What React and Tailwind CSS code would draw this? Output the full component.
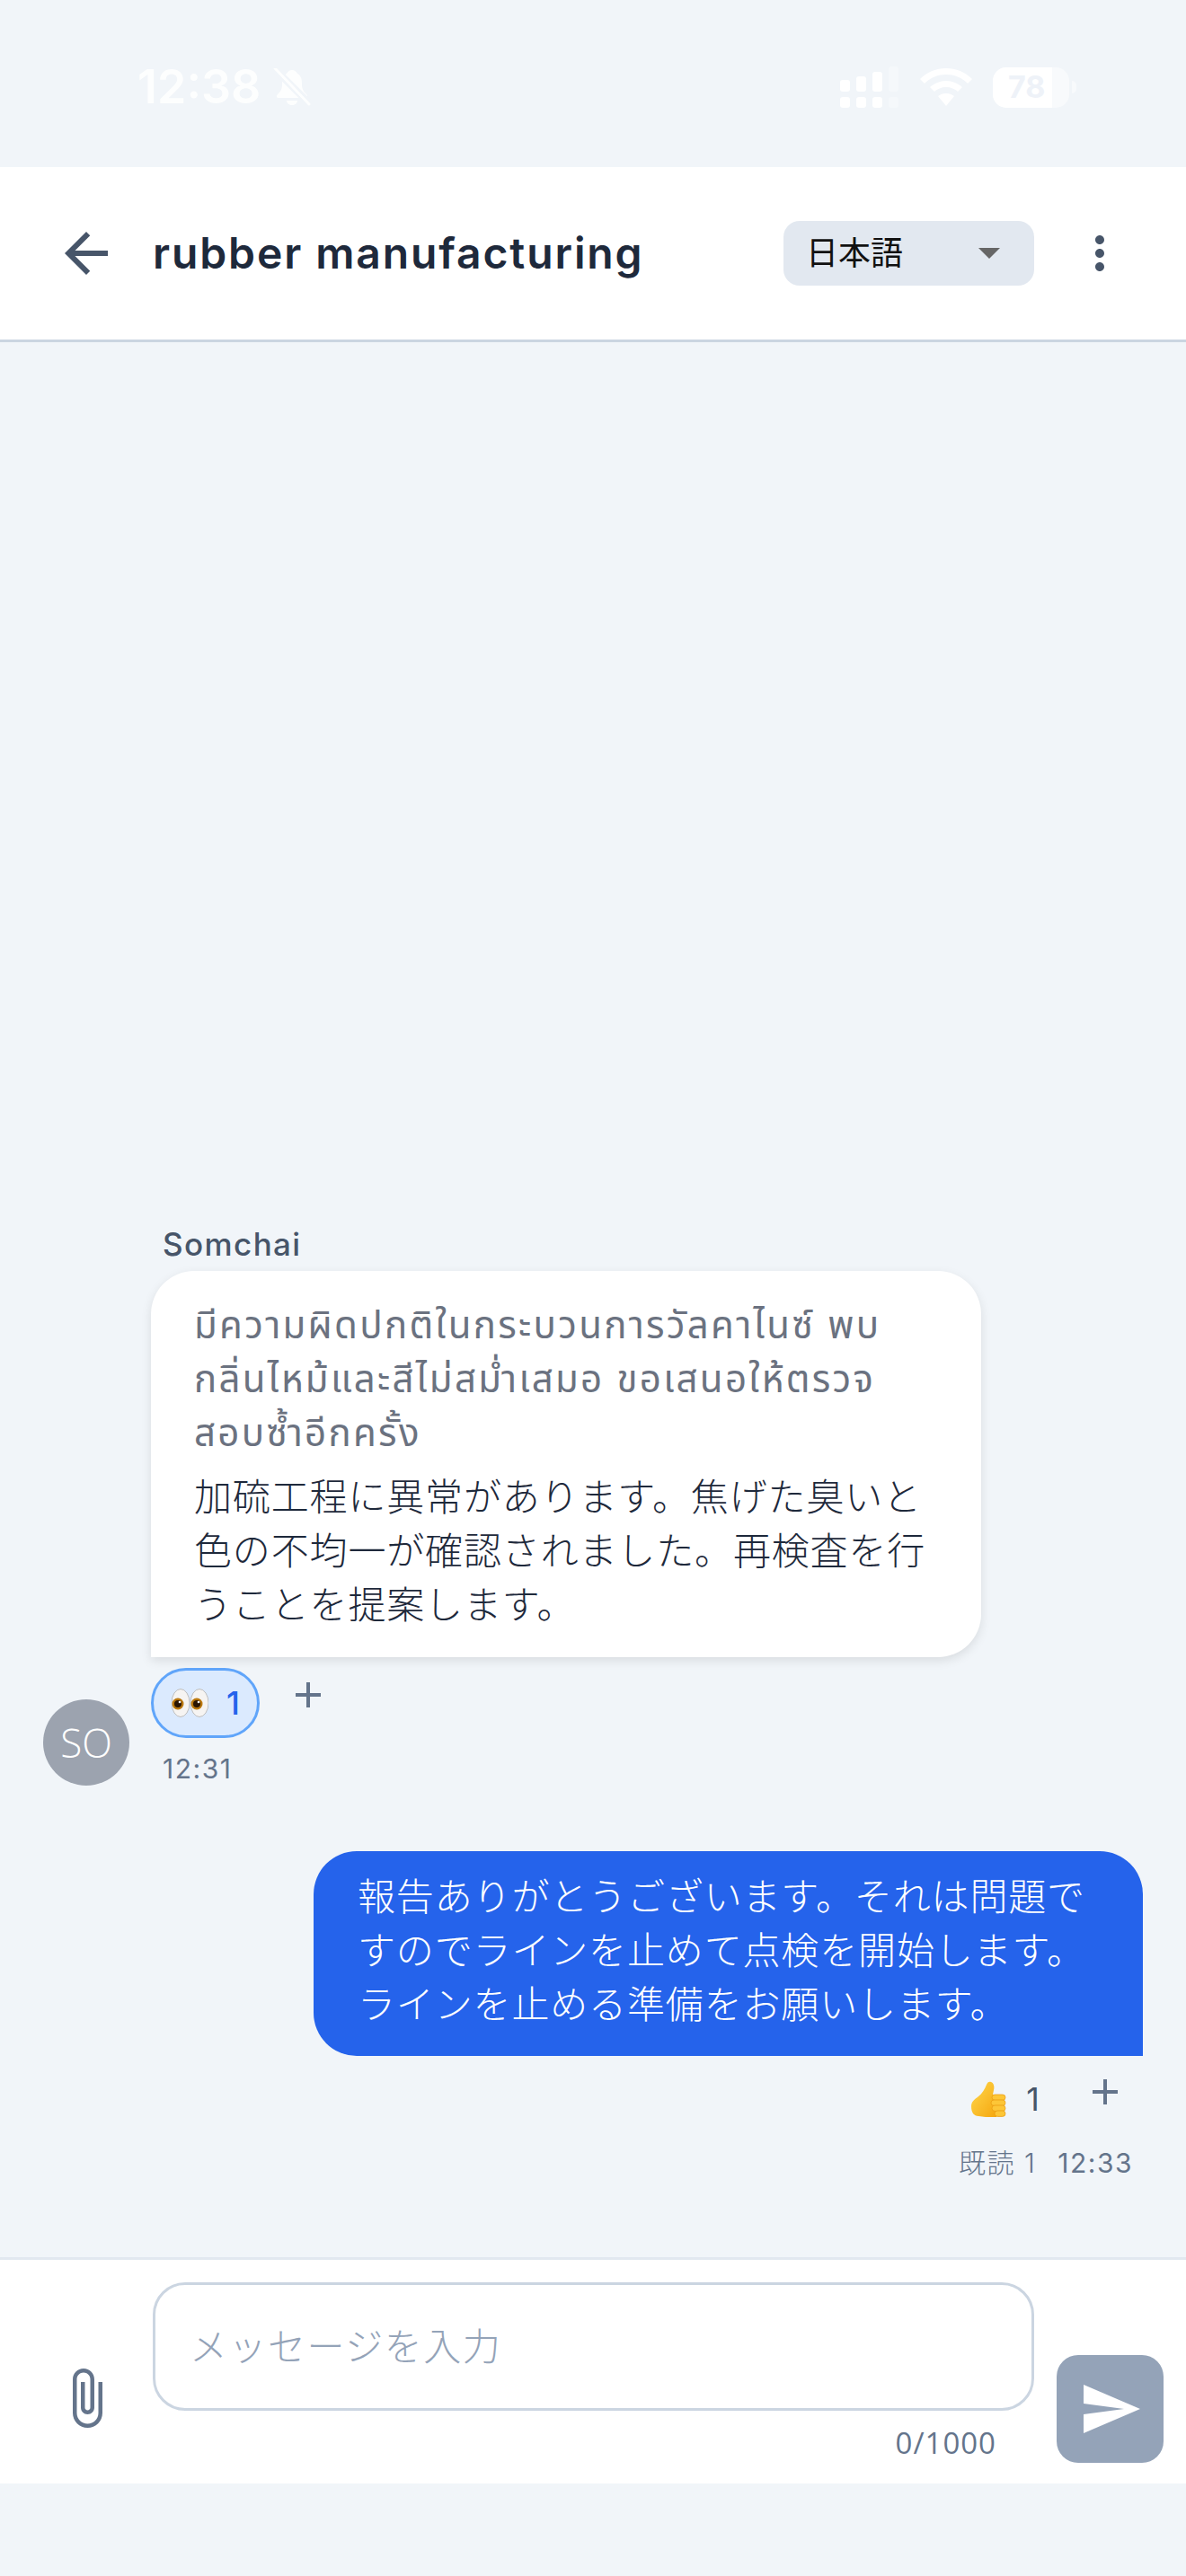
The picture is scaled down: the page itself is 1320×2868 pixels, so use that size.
const cjk = { fontFamily: 'Inter, "Noto Sans CJK JP", "Noto Sans Thai", "Noto Sans", sans-serif' };

function MuiIcon({ d, size, className }) {
  return (
    <svg viewBox="0 0 24 24" width={size} height={size} fill="currentColor" className={className}>
      <path d={d} />
    </svg>
  );
}

const icons = {
  back: 'M20 11H7.83l5.59-5.59L12 4l-8 8 8 8 1.41-1.41L7.83 13H20v-2z',
  more: 'M12 8c1.1 0 2-.9 2-2s-.9-2-2-2-2 .9-2 2 .9 2 2 2zm0 2c-1.1 0-2 .9-2 2s.9 2 2 2 2-.9 2-2-.9-2-2-2zm0 6c-1.1 0-2 .9-2 2s.9 2 2 2 2-.9 2-2-.9-2-2-2z',
  add: 'M19 13h-6v6h-2v-6H5v-2h6V5h2v6h6v2z',
  send: 'M2.01 21L23 12 2.01 3 2 10l15 2-15 2z',
  attach: 'M16.5 6v11.5c0 2.21-1.79 4-4 4s-4-1.79-4-4V5c0-1.38 1.12-2.5 2.5-2.5s2.5 1.12 2.5 2.5v10.5c0 .55-.45 1-1 1s-1-.45-1-1V6H10v9.5c0 1.38 1.12 2.5 2.5 2.5s2.5-1.12 2.5-2.5V5c0-2.21-1.79-4-4-4S7 2.79 7 5v12.5c0 3.04 2.46 5.5 5.5 5.5s5.5-2.46 5.5-5.5V6h-1.5z',
};

function Eyes() {
  const eye = (cx, px) => (
    <g key={cx}>
      <ellipse cx={cx} cy="16" rx="10" ry="15.5" fill="#f6f4f2" stroke="#bdbdbd" strokeWidth="1" />
      <circle cx={px} cy="17" r="6.5" fill="#b9770e" />
      <circle cx={px} cy="17" r="4" fill="#2a1503" />
      <circle cx={px + 2} cy="15" r="1.3" fill="#fff" />
    </g>
  );
  return (
    <svg viewBox="0 0 41 32" width="41" height="32">
      {eye(10, 7)}
      {eye(31, 28)}
    </svg>
  );
}

function Thumb() {
  const fingers = [
    [15, 15],
    [21, 16],
    [27, 15],
    [33, 12],
  ];
  return (
    <svg viewBox="0 0 40 41" width="40" height="41">
      <defs>
        <linearGradient id="thumbFill" x1="0" y1="0" x2="1" y2="1">
          <stop offset="0" stopColor="#ffd84d" />
          <stop offset="1" stopColor="#f5a70f" />
        </linearGradient>
      </defs>
      <path d="M0 28c0-5 4-8 8-11 4-3 7-8 9-13 1-3 3-4 5-3 3 1 4 5 3 9l-1 5h4v25H16c-3 0-5-1-8-1-5 0-8-4-8-11z" fill="url(#thumbFill)" />
      {fingers.map(([y, w]) => (
        <rect key={y} x={39 - w - 1} y={y} width={w} height="6.4" rx="3.2" fill="#fdc637" stroke="#e8980f" strokeWidth="0.7" />
      ))}
    </svg>
  );
}

function StatusBar() {
  return (
    <div className="h-[186px] shrink-0 flex items-center justify-between pt-[8px] pl-[153px] pr-[122px]">
      <div className="flex items-center gap-[14px] text-white">
        <span className="text-[52px] leading-none font-semibold opacity-90">12:38</span>
        <svg viewBox="0 0 42 42" width="42" height="42" fill="#fff" opacity="0.9">
          <path d="M21 2c3 0 5 2 6 4 4 2 5 6 5 11 0 5 1 8 5 12 2 2 1 4-1 4H6c-2 0-3-2-1-4 4-4 5-6 5-12 0-5 1-9 5-11 1-2 3-4 6-4z" />
          <path d="M15 36h12c0 3-3 5-6 5s-6-2-6-5z" />
          <path d="M2 1l38 38" stroke="#f1f5f9" strokeWidth="8" />
          <path d="M2 0l38 40" stroke="#fff" strokeWidth="3" strokeLinecap="round" />
        </svg>
      </div>
      <div className="flex items-center gap-[23px]">
        <svg viewBox="0 0 66 46" width="66" height="46" fill="#fff">
          <rect x="0" y="15" width="11" height="13" rx="3" />
          <rect x="18" y="11" width="11" height="17" rx="3" />
          <rect x="36" y="6" width="11" height="22" rx="3" />
          <rect x="54" y="0" width="11" height="28" rx="3" opacity="0.3" />
          <rect x="0" y="34" width="11" height="12" rx="3" />
          <rect x="18" y="34" width="11" height="12" rx="3" />
          <rect x="36" y="34" width="11" height="12" rx="3" />
          <rect x="54" y="34" width="11" height="12" rx="3" opacity="0.3" />
        </svg>
        <svg viewBox="0 0 58 42" width="58" height="42" fill="#fff">
          <path d="M29 0c11 0 21 4 29 12l-5 5C46 10 38 7 29 7S12 10 5 17l-5-5C8 4 18 0 29 0z" />
          <path d="M29 14c7 0 13 3 18 7l-5 5c-3-3-8-5-13-5s-10 2-13 5l-5-5c5-4 11-7 18-7z" />
          <path d="M29 28c4 0 6 1 9 3L29 42l-9-11c3-2 5-3 9-3z" />
        </svg>
        <div className="flex items-center gap-[3px]">
          <div className="relative w-[85px] h-[45px] rounded-[15px] overflow-hidden bg-white/50 flex items-center pl-[17px]">
            <div className="absolute left-0 top-0 bottom-0 w-[66px] bg-white" />
            <span className="relative text-[34px] leading-none font-bold text-[#eef2f8]">78</span>
          </div>
          <div className="w-[5px] h-[14px] rounded-r-full bg-white/50" />
        </div>
      </div>
    </div>
  );
}

function Header() {
  return (
    <div className="h-[195px] shrink-0 bg-white border-b-[3px] border-[#cbd5e1] flex items-center pl-[60px] pr-[66px]">
      <MuiIcon d={icons.back} size={72} className="text-[#475569] shrink-0" />
      <h1 className="ml-[38px] flex-1 text-[48px] font-semibold text-[#1e293b] leading-none tracking-[1.9px]">rubber manufacturing</h1>
      <div className="w-[279px] h-[72px] rounded-[18px] bg-[#e2e8f0] flex items-center justify-between pl-[25px] pr-[38px] mr-[43px]">
        <span className="text-[36px] leading-none text-[#111]">日本語</span>
        <span className="w-0 h-0 border-x-[12px] border-x-transparent border-t-[12px] border-t-[#666]" />
      </div>
      <MuiIcon d={icons.more} size={60} className="text-[#475569] shrink-0" />
    </div>
  );
}

function IncomingMessage() {
  return (
    <div className="flex items-end pl-[48px] gap-[24px]">
      <div className="w-[96px] h-[96px] rounded-full bg-[#9ca3af] text-white text-[44px] font-light flex items-center justify-center mb-[1px] shrink-0" style={{ fontFamily: '"Open Sans", sans-serif' }}>SO</div>
      <div className="flex flex-col items-start">
        <div className="pl-[13px] text-[35px] leading-[44px] font-medium text-[#475569] mb-[8px] tracking-[1.4px]">Somchai</div>
        <div className="w-[924px] h-[430px] bg-white rounded-[48px] rounded-bl-none shadow-[0_4px_12px_rgba(0,0,0,0.1)] pt-[30px] pl-[48px]">
          <p className="text-[42px] leading-[60px] text-[#6b7280] mb-[12px] whitespace-nowrap tracking-[2.3px]">
            มีความผิดปกติในกระบวนการวัลคาไนซ์ พบ<br />
            กลิ่นไหม้และสีไม่สม่ำเสมอ ขอเสนอให้ตรวจ<br />
            สอบซ้ำอีกครั้ง
          </p>
          <p className="text-[42px] leading-[60px] text-[#1e293b] whitespace-nowrap tracking-[0.85px] font-light">
            加硫工程に異常があります。焦げた臭いと<br />
            色の不均一が確認されました。再検査を行<br />
            うことを提案します。
          </p>
        </div>
        <div className="flex items-start mt-[12px]">
          <div className="w-[121px] h-[78px] rounded-full border-[3px] border-[#60a5fa] bg-[#dbeafe] flex items-center pl-[20px] gap-[20px]">
            <Eyes />
            <span className="text-[36px] leading-none font-medium text-[#2563eb]">1</span>
          </div>
          <MuiIcon d={icons.add} size={48} className="text-[#64748b] ml-[30px] mt-[6px]" />
        </div>
        <div className="pl-[13px] mt-[14px] text-[30px] leading-[40px] text-[#64748b] tracking-[1.5px]">12:31</div>
      </div>
    </div>
  );
}

function OutgoingMessage() {
  return (
    <div className="flex flex-col items-end pr-[48px] mt-[72px]">
      <div className="w-[923px] h-[228px] bg-[#2563eb] text-white rounded-[48px] rounded-br-none pt-[21px] pl-[49px]">
        <p className="text-[42px] leading-[60px] whitespace-nowrap tracking-[0.85px] font-light">
          報告ありがとうございます。それは問題で<br />
          すのでラインを止めて点検を開始します。<br />
          ラインを止める準備をお願いします。
        </p>
      </div>
      <div className="flex items-start mt-[28px] pr-[28px]">
        <Thumb />
        <span className="ml-[21px] -mt-[4px] text-[36px] leading-[48px] text-[#475569]">1</span>
        <MuiIcon d={icons.add} size={48} className="text-[#64748b] ml-[49px] -mt-[12px] -mr-[10px]" />
      </div>
      <div className="flex items-center gap-[24px] mt-[27px] pr-[11px] text-[30px] leading-[40px] tracking-[1.5px] font-light">
        <span className="text-[#64748b]">既読 1</span>
        <span className="text-[#64748b] font-normal">12:33</span>
      </div>
    </div>
  );
}

function Composer() {
  return (
    <div className="h-[252px] shrink-0 bg-white border-t-[3px] border-[#e2e8f0] flex pl-[60px] pr-[25px]">
      <MuiIcon d={icons.attach} size={72} className="text-[#64748b] mt-[118px] shrink-0" />
      <div className="ml-[38px] w-[981px] pt-[25px]">
        <div className="h-[143px] rounded-[36px] border-[3px] border-[#cbd5e1] flex items-center pl-[38px] text-[42px] leading-none text-[#94a3b8] tracking-[1.5px] font-light">メッセージを入力</div>
        <div className="mt-[15px] pr-[42px] text-right text-[33px] leading-[42px] text-[#64748b] tracking-[1px]" style={{ fontFamily: '"Open Sans", sans-serif' }}>0/1000</div>
      </div>
      <div className="ml-[25px] mt-[106px] w-[119px] h-[120px] rounded-[24px] bg-[#94a3b8] flex items-center justify-center shrink-0">
        <MuiIcon d={icons.send} size={72} className="text-white" />
      </div>
    </div>
  );
}

export default function App() {
  return (
    <div className="w-[1320px] h-[2868px] bg-[#f1f5f9] flex flex-col overflow-hidden" style={cjk}>
      <StatusBar />
      <Header />
      <div className="flex-1 flex flex-col justify-end pb-[85px]">
        <IncomingMessage />
        <OutgoingMessage />
      </div>
      <Composer />
      <div className="h-[103px] shrink-0" />
    </div>
  );
}
